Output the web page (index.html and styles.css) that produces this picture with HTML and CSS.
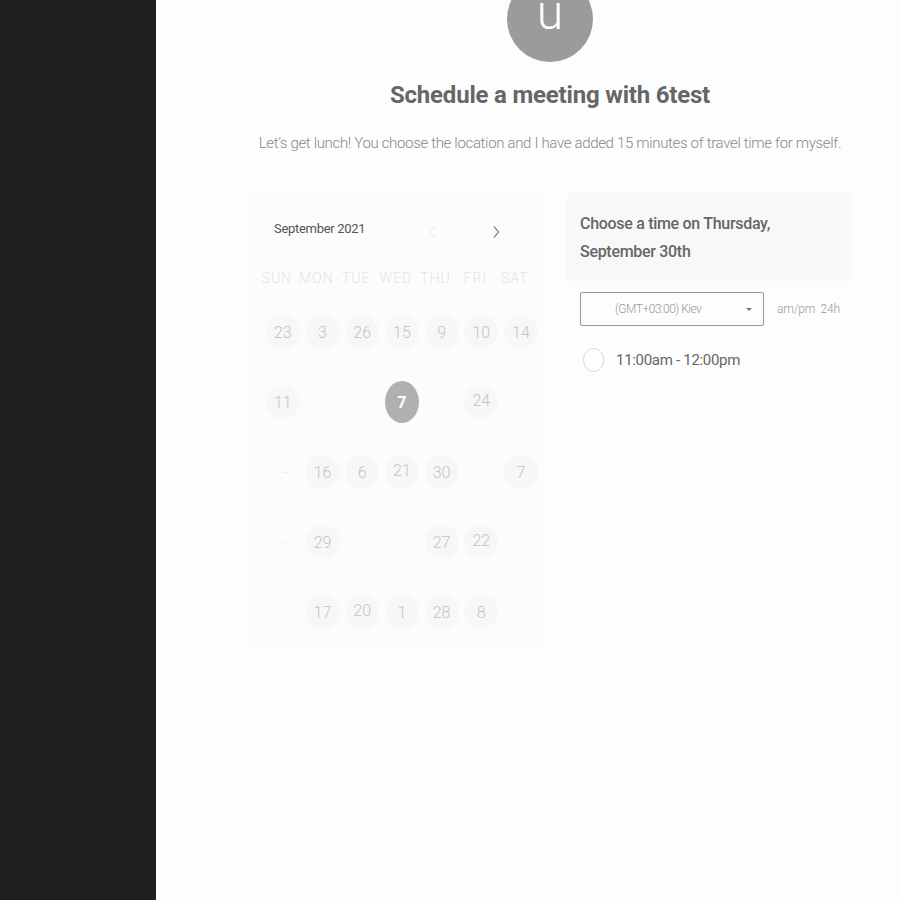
FILE: index.html
```html
<!DOCTYPE html>
<html>
<head>
<meta charset="utf-8">
<link rel="stylesheet" href="styles.css">
</head>
<body>
<div class="app">
  <aside class="sidebar"></aside>
  <main class="main">
    <div class="content">
      <div class="avatar"><span>u</span></div>
      <h1 class="title">Schedule a meeting with 6test</h1>
      <p class="subtitle">Let’s get lunch! You choose the location and I have added 15 minutes of travel time for myself.</p>
      <div class="columns">
        <section class="calendar">
          <div class="cal-head">
            <span class="month">September 2021</span>
            <span class="nav prev">
              <svg width="10" height="14" viewBox="0 0 10 14"><path d="M7 1.5 L2.5 7 L7 12.5" fill="none" stroke="#eeeeee" stroke-width="1.2"/></svg>
            </span>
            <span class="nav next">
              <svg width="10" height="14" viewBox="0 0 10 14"><path d="M3 1.5 L7.5 7 L3 12.5" fill="none" stroke="#8a8a8a" stroke-width="1.3"/></svg>
            </span>
          </div>
          <div class="weekdays">
            <span>SUN</span><span>MON</span><span>TUE</span><span>WED</span><span>THU</span><span>FRI</span><span>SAT</span>
          </div>
          <div class="days">
            <span class="day">23</span><span class="day">3</span><span class="day">26</span><span class="day">15</span><span class="day">9</span><span class="day">10</span><span class="day">14</span>
            <span class="day">11</span><span class="empty"></span><span class="empty"></span><span class="day selected">7</span><span class="empty"></span><span class="day up">24</span><span class="empty"></span>
            <span class="empty dash"></span><span class="day">16</span><span class="day">6</span><span class="day up">21</span><span class="day">30</span><span class="empty"></span><span class="day">7</span>
            <span class="empty dash"></span><span class="day">29</span><span class="empty"></span><span class="empty"></span><span class="day">27</span><span class="day up">22</span><span class="empty"></span>
            <span class="empty"></span><span class="day">17</span><span class="day up">20</span><span class="day">1</span><span class="day">28</span><span class="day">8</span><span class="empty"></span>
          </div>
        </section>
        <section class="times">
          <div class="times-head">Choose a time on Thursday, September 30th</div>
          <div class="tz-row">
            <div class="tz-select">
              <span class="tz-label">(GMT+03:00) Kiev</span>
              <span class="caret"></span>
            </div>
            <span class="format">am/pm&nbsp; 24h</span>
          </div>
          <div class="slot">
            <span class="radio"></span>
            <span class="slot-label">11:00am - 12:00pm</span>
          </div>
        </section>
      </div>
    </div>
  </main>
</div>
</body>
</html>
```

FILE: styles.css
```css
* { box-sizing: border-box; }
html, body { margin: 0; padding: 0; }
body {
  font-family: Roboto, "Liberation Sans", sans-serif;
  background: #fdfdfd;
  height: 900px;
  overflow: hidden;
}
.app { display: flex; height: 900px; }
.sidebar { width: 156px; background: #1f1f1f; flex: none; }
.main { flex: 1; padding-left: 92px; background: #fdfdfd; }
.content { width: 604px; display: flex; flex-direction: column; align-items: center; }
.avatar {
  width: 86px; height: 86px; border-radius: 50%;
  background: #9b9b9b; margin-top: -24px;
  display: flex; align-items: center; justify-content: center;
}
.avatar span { color: #fff; font-size: 48px; font-weight: 300; line-height: 1; margin-top: -12px; }
.title {
  margin: 19px 0 0; font-size: 24px; font-weight: 700; color: #666;
  letter-spacing: -0.2px; line-height: 28px;
}
.subtitle {
  margin: 24px 0 0; font-size: 15px; font-weight: 300; color: #888; line-height: 20px;
  letter-spacing: -0.33px; white-space: nowrap;
}
.columns { width: 604px; display: flex; gap: 22px; margin-top: 38px; align-items: flex-start; }
.calendar {
  width: 297px; height: 455px; background: #fcfcfc;
  box-shadow: 0 0 3px rgba(0,0,0,0.02);
  padding: 28px 4px 0 15px;
}
.cal-head { display: flex; align-items: center; height: 18px; }
.month { font-size: 13px; font-weight: 400; color: #555; margin-left: 11px; width: 156px; letter-spacing: -0.3px; }
.nav { display: flex; margin-top: 8px; }
.prev { margin-left: -2px; }
.next { margin-left: 53px; }
.weekdays {
  display: grid; grid-template-columns: repeat(7, 39.7px);
  margin: 32px 0 0 -6px; height: 18px; align-items: center;
}
.weekdays span {
  text-align: center; font-size: 14px; font-weight: 300; color: #e4e4e4; letter-spacing: 1px;
}
.days {
  display: grid; grid-template-columns: repeat(7, 39.7px); grid-auto-rows: 70px;
  margin-top: 28px;
}
.day, .empty {
  justify-self: center; width: 34px; height: 34px; border-radius: 50%;
  display: flex; align-items: center; justify-content: center;
  font-size: 16px; font-weight: 300; color: #c4c4c4;
}
.day { background: #f7f7f7; }
.day.up { padding-bottom: 3px; }
.day.selected {
  background: #b0b0b0; color: #fff; font-weight: 700; height: 42px; margin-top: -4px;
}
.empty.dash::before {
  content: ""; width: 5px; height: 1px; background: #eee; margin-left: 6px;
}
.times { width: 285px; padding-top: 2px; }
.times-head {
  background: #f8f8f8; padding: 17px 60px 15px 13px;
  font-size: 16px; font-weight: 500; color: #666; line-height: 28px; letter-spacing: -0.3px;
}
.tz-row { display: flex; align-items: center; margin: 11px 0 0 13px; }
.tz-select {
  width: 184px; height: 34px; border: 1px solid #999; border-radius: 2px;
  display: flex; align-items: center; position: relative;
}
.tz-label { font-size: 12px; font-weight: 300; color: #999; margin-left: 34px; letter-spacing: -0.5px; }
.caret {
  position: absolute; right: 11px; top: 15px;
  width: 0; height: 0; border-left: 3px solid transparent; border-right: 3px solid transparent;
  border-top: 3px solid #777;
}
.format { font-size: 12px; font-weight: 300; color: #999; margin-left: 13px; letter-spacing: -0.2px; }
.slot { display: flex; align-items: center; margin: 22px 0 0 16px; }
.radio {
  width: 21px; height: 24px; border-radius: 50%; border: 1px solid #ddd; background: #fff;
}
.slot-label { font-size: 15px; font-weight: 400; color: #666; margin-left: 12px; letter-spacing: -0.3px; }
```
